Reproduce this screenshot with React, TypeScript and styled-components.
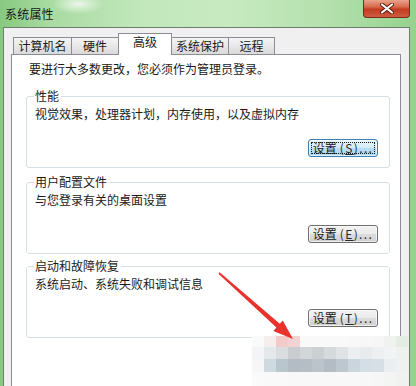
import React from 'react';
import styled, { createGlobalStyle } from 'styled-components';

const GlobalStyle = createGlobalStyle`
  html, body {
    margin: 0;
    padding: 0;
    background: #ffffff;
  }
  body {
    font-family: "Noto Sans CJK SC", "Liberation Sans", sans-serif;
    font-size: 12px;
    color: #1a1a1a;
  }
`;

const Window = styled.div`
  position: relative;
  width: 416px;
  height: 386px;
  overflow: hidden;
  display: flex;
  flex-direction: column;
  background:
    radial-gradient(ellipse 26px 10px at 78px 4px, rgba(255, 255, 255, 0.75), rgba(255, 255, 255, 0)),
    linear-gradient(90deg, #86c980 0%, #a9dba2 12%, #c3e8bc 35%, #c8eac1 55%, #b2e0ab 80%, #94d28d 100%);
`;

const TitleBar = styled.div`
  height: 27px;
  flex: none;
  display: flex;
  align-items: center;
  padding-left: 5px;
`;

const Title = styled.span`
  font-size: 12px;
  color: #161616;
  letter-spacing: 0.2px;
`;

const CloseButton = styled.div`
  margin-left: auto;
  margin-right: 6px;
  align-self: flex-start;
  width: 47px;
  height: 18px;
  box-sizing: border-box;
  border: 1px solid #7a2a1a;
  border-top: none;
  border-radius: 0 0 4px 4px;
  background: linear-gradient(180deg, #e9a38d 0%, #d9694d 40%, #c23d20 55%, #cf5b40 100%);
  display: flex;
  align-items: center;
  justify-content: center;
`;

const Dialog = styled.div`
  flex: 1;
  margin: 0 6px 0 3px;
  border: 1px solid #6d7d6d;
  border-bottom: none;
  background: #f0f0f0;
  padding: 5px 8px 0 7px;
  display: flex;
  flex-direction: column;
  min-height: 0;
`;

const TabStrip = styled.div`
  display: flex;
  align-items: flex-end;
  padding-left: 2px;
  margin-bottom: -1px;
`;

interface ITabProps {
  $active?: boolean;
  $width: number;
}

const Tab = styled.div<ITabProps>`
  width: ${({ $width }) => `${$width}px`};
  box-sizing: border-box;
  height: ${({ $active }) => ($active ? '22px' : '17px')};
  margin-bottom: ${({ $active }) => ($active ? '0' : '1px')};
  border: 1px solid #8a8d95;
  border-bottom: none;
  margin-left: -1px;
  background: ${({ $active }) =>
    $active ? '#ffffff' : 'linear-gradient(180deg, #f4f4f4 0%, #e8e8e8 50%, #d9d9d9 100%)'};
  position: ${({ $active }) => ($active ? 'relative' : 'static')};
  z-index: ${({ $active }) => ($active ? 1 : 0)};
  display: flex;
  align-items: center;
  justify-content: center;
  padding-bottom: ${({ $active }) => ($active ? '5px' : '0')};
  font-size: 12px;
  line-height: 14px;
  &:first-child {
    margin-left: 0;
  }
`;

const TabPage = styled.div`
  flex: 1;
  background: #ffffff;
  border: 1px solid #8a8d95;
  border-bottom: none;
  padding: 7px 10px 0 14px;
  display: flex;
  flex-direction: column;
`;

const Intro = styled.div`
  margin-left: 3px;
  line-height: 14px;
`;

interface IGroupProps {
  $gap: number;
}

const Group = styled.div<IGroupProps>`
  margin-top: ${({ $gap }) => `${$gap}px`};
  border: 1px solid #d5dfe5;
  border-radius: 3px;
  padding: 0 11px 10px 8px;
  display: flex;
  flex-direction: column;
`;

const GroupLabel = styled.span`
  align-self: flex-start;
  margin: -8px 0 0 -1px;
  padding: 0 2px 0 1px;
  background: #ffffff;
  line-height: 14px;
`;

const GroupText = styled.div`
  margin-top: 4px;
  line-height: 14px;
`;

interface IButtonProps {
  $focused?: boolean;
}

const Button = styled.div<IButtonProps>`
  align-self: flex-end;
  margin-top: 18px;
  width: 70px;
  height: 18px;
  box-sizing: border-box;
  border: 1px solid ${({ $focused }) => ($focused ? '#3c7fb1' : '#707070')};
  border-radius: 3px;
  background: ${({ $focused }) =>
    $focused
      ? 'linear-gradient(180deg, #e5f4fc 0%, #d3ecfa 50%, #b8def5 51%, #a9d7f3 100%)'
      : 'linear-gradient(180deg, #f2f2f2 0%, #ebebeb 50%, #dddddd 51%, #cfcfcf 100%)'};
  box-shadow: inset 0 0 0 1px rgba(255, 255, 255, 0.6);
  outline: ${({ $focused }) => ($focused ? '1px dotted #1a1a1a' : 'none')};
  outline-offset: -4px;
  display: flex;
  align-items: center;
  justify-content: center;
  font-size: 12px;
  line-height: 14px;
`;

const Accel = styled.span`
  margin-left: 3px;
  letter-spacing: 1.4px;
  color: #2a2a2a;
  & u {
    text-decoration: underline;
    text-underline-offset: 1px;
  }
`;

const Overlay = styled.svg`
  position: absolute;
  left: 0;
  top: 0;
  pointer-events: none;
`;

const Mosaic = styled.div`
  position: absolute;
  left: 252px;
  top: 336px;
  display: grid;
  grid-template-columns: repeat(13, 12px);
  grid-template-rows: 11px 12px 13px 14px;
  pointer-events: none;
`;

const Cell = styled.div`
  width: 12px;
`;

const mosaicColors = [
  ['#fafafa', '#f6eded', '#f3caca', '#f2d2d2', '#f9f9f9', '#f9f9f9', '#f9f9f9', '#f9f9f9', '#f8f8f8', '#f7f7f7', '#f5f6f5', '#eff2ee', '#e3ede1'],
  ['#f3f4f5', '#e4e8eb', '#d9dde0', '#c9cdd1', '#d2d6d9', '#cbd0d3', '#d6dadd', '#dfe3e6', '#eceff1', '#e8ebee', '#edf0f2', '#f2f3f4', '#eef2ed'],
  ['#f6f6f6', '#cfd9e0', '#bac6ce', '#b3bcc4', '#b5bec6', '#bbc3cb', '#b3bcc4', '#bcc7cf', '#cad6de', '#d3dee6', '#d6dfe6', '#eaeef1', '#eef1ee'],
  ['#fafafa', '#f9f9f9', '#f9f9f9', '#f8f8f8', '#f8f8f8', '#f8f8f8', '#f8f8f8', '#f8f8f8', '#f8f8f8', '#f7f7f7', '#f6f6f6', '#f4f4f4', '#f0f2ef'],
];

const tabs = [
  { label: '计算机名', width: 59 },
  { label: '硬件', width: 48 },
  { label: '高级', width: 54, active: true },
  { label: '系统保护', width: 58 },
  { label: '远程', width: 47 },
];

interface ISection {
  title: string;
  text: string;
  accel: string;
  gap: number;
  focused?: boolean;
}

const sections: ISection[] = [
  { title: '性能', text: '视觉效果，处理器计划，内存使用，以及虚拟内存', accel: 'S', gap: 20, focused: true },
  { title: '用户配置文件', text: '与您登录有关的桌面设置', accel: 'E', gap: 14 },
  { title: '启动和故障恢复', text: '系统启动、系统失败和调试信息', accel: 'T', gap: 12 },
];

export default function App(): JSX.Element {
  return (
    <>
      <GlobalStyle />
      <Window>
        <TitleBar>
          <Title>系统属性</Title>
          <CloseButton>
            <svg width="14" height="11" viewBox="0 0 14 11">
              <path d="M2 1.5 L12 9.5 M12 1.5 L2 9.5" stroke="#5a1a10" strokeWidth="4" strokeLinecap="round" />
              <path d="M2 1.5 L12 9.5 M12 1.5 L2 9.5" stroke="#ffffff" strokeWidth="2.2" strokeLinecap="round" />
            </svg>
          </CloseButton>
        </TitleBar>
        <Dialog>
          <TabStrip>
            {tabs.map((tab) => (
              <Tab key={tab.label} $active={tab.active} $width={tab.width}>
                {tab.label}
              </Tab>
            ))}
          </TabStrip>
          <TabPage>
            <Intro>要进行大多数更改，您必须作为管理员登录。</Intro>
            {sections.map((section) => (
              <Group key={section.title} $gap={section.gap}>
                <GroupLabel>{section.title}</GroupLabel>
                <GroupText>{section.text}</GroupText>
                <Button $focused={section.focused}>
                  设置
                  <Accel>
                    (<u>{section.accel}</u>)...
                  </Accel>
                </Button>
              </Group>
            ))}
          </TabPage>
        </Dialog>
        <Mosaic>
          {mosaicColors.map((row, r) =>
            row.map((color, c) => <Cell key={`${r}-${c}`} style={{ background: color }} />),
          )}
        </Mosaic>
        <Overlay width="416" height="386" viewBox="0 0 416 386">
          <polygon
            points="219.6,272.3 279.8,323.8 282.8,320.5 293,339 273.4,330.9 276.4,327.6 218.4,273.7"
            fill="#e8322c"
          />
        </Overlay>
      </Window>
    </>
  );
}
